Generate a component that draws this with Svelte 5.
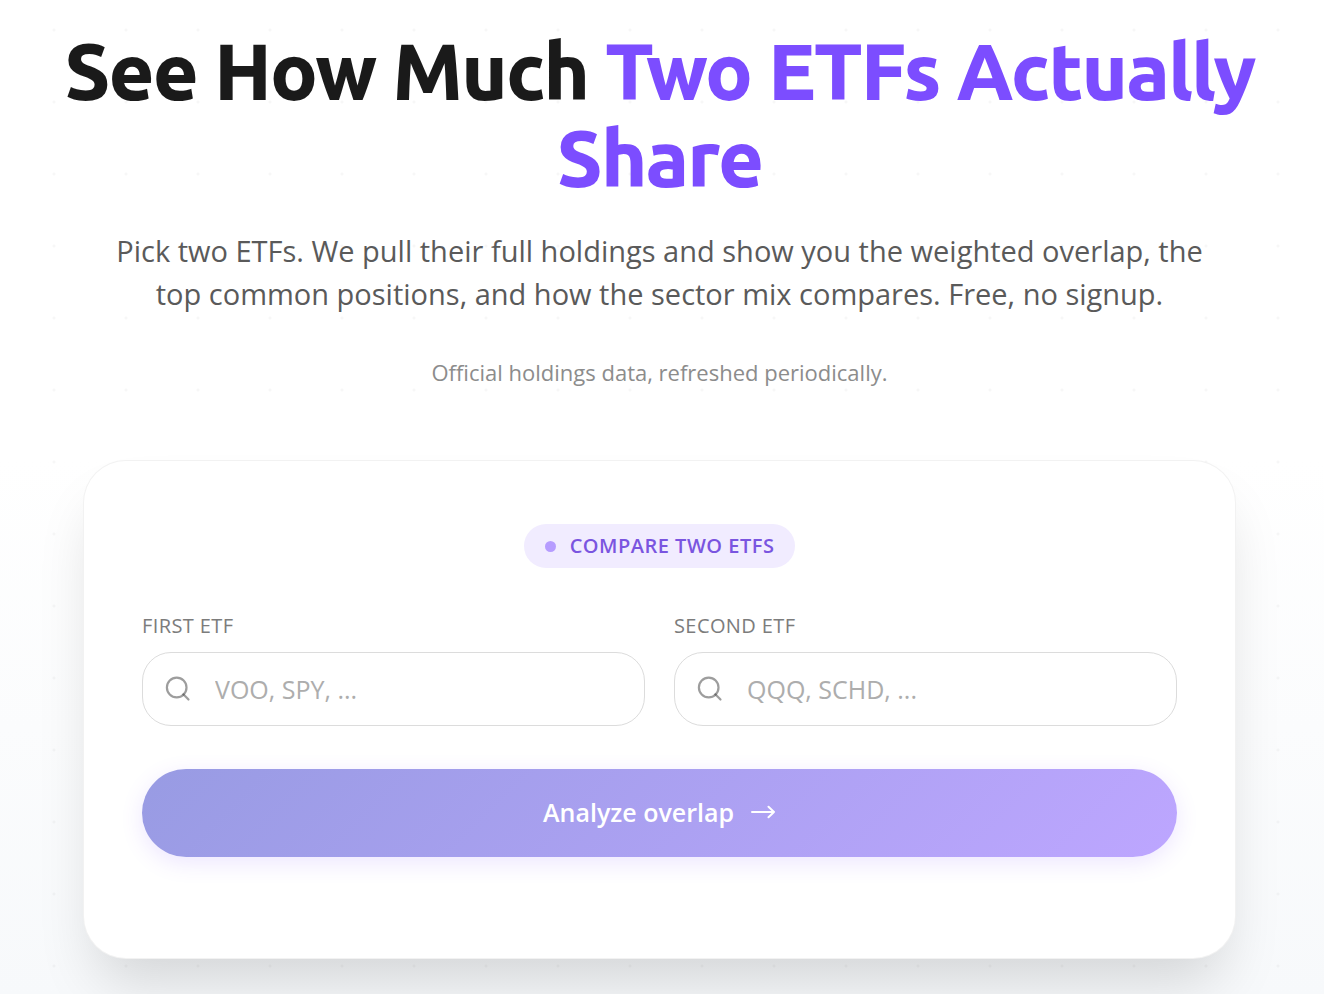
<script lang="ts">
  const fields = $state([
    { id: "first-etf", label: "First ETF", placeholder: "VOO, SPY, ...", value: "" },
    { id: "second-etf", label: "Second ETF", placeholder: "QQQ, SCHD, ...", value: "" },
  ]);

  function handleSubmit(e: Event) {
    e.preventDefault();
  }
</script>

<main class="hero">
  <h1>See How Much <span class="accent">Two ETFs Actually Share</span></h1>
  <p class="lead">
    Pick two ETFs. We pull their full holdings and show you the weighted overlap, the top common
    positions, and how the sector mix compares. Free, no signup.
  </p>
  <p class="note">Official holdings data, refreshed periodically.</p>

  <form class="card" onsubmit={handleSubmit}>
    <div class="badge"><span class="dot"></span>Compare two ETFs</div>

    <div class="fields">
      {#each fields as field (field.id)}
        <div class="field">
          <label for={field.id}>{field.label}</label>
          <div class="control">
            <svg class="search" viewBox="0 0 26 26" aria-hidden="true">
              <circle cx="11.7" cy="11.5" r="9.8" />
              <path d="M18.3 18.3 23.5 23.5" />
            </svg>
            <input
              id={field.id}
              type="text"
              placeholder={field.placeholder}
              autocomplete="off"
              bind:value={field.value}
            />
          </div>
        </div>
      {/each}
    </div>

    <button type="submit">
      Analyze overlap
      <svg class="arrow" viewBox="0 0 26 14" aria-hidden="true">
        <path d="M2 7H24M18.5 1.8 24 7l-5.5 5.2" />
      </svg>
    </button>
  </form>
</main>

<style>
  :global(body) {
    background: linear-gradient(180deg, #ffffff 0, #ffffff 460px, #f7f9fb 994px);
  }

  .hero {
    box-sizing: border-box;
    min-height: 100vh;
    padding: 27px 53px 35px 48px;
    font-family: "Open Sans", "Noto Sans", sans-serif;
    text-align: center;
    /* faint dot grid */
    background-image: radial-gradient(circle at 2px 2px, rgba(0, 0, 0, 0.03) 1px, transparent 2px);
    background-size: 72px 72px;
    background-position: 52px 28px;
    background-repeat: repeat;
  }

  h1 {
    margin: 0;
    font-family: Ubuntu, "Open Sans", sans-serif;
    font-size: 79px;
    font-weight: 800;
    line-height: 87px;
    letter-spacing: -0.024em;
    color: #1a1a1a;
  }

  .accent {
    color: #7c4dff;
  }

  .lead {
    max-width: 1100px;
    margin: 28px auto 0;
    font-size: 29px;
    line-height: 43px;
    color: #5a5a5a;
  }

  .note {
    margin: 41px 0 0;
    font-size: 22px;
    line-height: 32px;
    color: #8c8c8c;
  }

  .card {
    box-sizing: border-box;
    max-width: 1153px;
    margin: 72px auto 0;
    padding: 63px 58px 101px;
    border: 1px solid rgba(0, 0, 0, 0.05);
    border-radius: 43px;
    background: #fff;
    box-shadow: 0 36px 58px -14px rgba(0, 0, 0, 0.15);
  }

  .badge {
    display: inline-flex;
    align-items: center;
    gap: 14px;
    height: 44px;
    padding: 0 21px;
    border-radius: 22px;
    background: #f1ecff;
    color: #7a55e0;
    font-size: 20px;
    font-weight: 600;
    line-height: 28px;
    letter-spacing: 0.025em;
    text-transform: uppercase;
  }

  .dot {
    width: 11px;
    height: 11px;
    border-radius: 50%;
    background: #b69cff;
  }

  .fields {
    display: grid;
    grid-template-columns: 1fr 1fr;
    gap: 29px;
    margin-top: 43px;
    text-align: left;
  }

  label {
    display: block;
    margin-bottom: 12px;
    font-size: 20px;
    line-height: 29px;
    letter-spacing: 0.02em;
    color: #7c7c7c;
    text-transform: uppercase;
  }

  .control {
    display: flex;
    align-items: center;
    gap: 24px;
    box-sizing: border-box;
    height: 74px;
    padding: 0 22px;
    border: 1px solid #dcdcdc;
    border-radius: 29px;
    background: #fff;
  }

  .control:focus-within {
    border-color: #7c4dff;
  }

  .search,
  .arrow {
    flex: none;
    fill: none;
    stroke: currentColor;
    stroke-width: 2;
    stroke-linecap: round;
    stroke-linejoin: round;
  }

  .search {
    width: 26px;
    height: 26px;
    color: rgba(60, 60, 60, 0.5);
    stroke-width: 2.2;
  }

  input {
    flex: 1;
    min-width: 0;
    padding: 0;
    border: 0;
    outline: none;
    background: none;
    font: inherit;
    font-size: 25px;
    color: #1a1a1a;
  }

  input::placeholder {
    color: #adadad;
    opacity: 1;
  }

  button {
    display: flex;
    align-items: center;
    justify-content: center;
    gap: 16px;
    box-sizing: border-box;
    width: 100%;
    height: 88px;
    margin-top: 43px;
    padding: 0 0 2px;
    border: 0;
    border-radius: 44px;
    background: linear-gradient(135deg, #989be3, #bda6ff);
    box-shadow: 0 6px 22px rgba(124, 77, 255, 0.14);
    color: #fff;
    font: inherit;
    font-size: 25px;
    font-weight: 600;
    line-height: 36px;
    cursor: pointer;
  }

  .arrow {
    width: 26px;
    height: 14px;
  }
</style>
